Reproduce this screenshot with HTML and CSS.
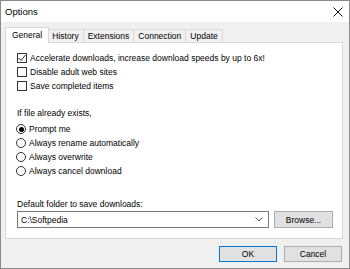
FILE: index.html
```html
<!DOCTYPE html>
<html lang="en">
  <head>
    <meta charset="UTF-8" />
    <title>Options</title>
    <link rel="stylesheet" href="styles.css">
  </head>
  <body>
    <div class="window">
      <div class="titleBar">
        <span class="title">Options</span>
        <svg class="closeIcon" width="10" height="10" viewBox="0 0 10 10">
          <path d="M0.5 0.5 L9.5 9.5 M9.5 0.5 L0.5 9.5" stroke="#111" stroke-width="1" fill="none" />
        </svg>
      </div>
      <div class="content">
        <div class="tabs">
          <span class="tab active">General</span>
          <span class="tab">History</span>
          <span class="tab">Extensions</span>
          <span class="tab">Connection</span>
          <span class="tab">Update</span>
        </div>
        <div class="panel">
          <div class="checkRow">
            <span class="box">
              <svg width="8" height="8" viewBox="0 0 8 8">
                <path d="M0.5 4 L3 6.5 L7.5 1" stroke="#222" stroke-width="1" fill="none" />
              </svg>
            </span>
            Accelerate downloads, increase download speeds by up to 6x!
          </div>
          <div class="checkRow"><span class="box"></span>Disable adult web sites</div>
          <div class="checkRow"><span class="box"></span>Save completed items</div>

          <div class="groupLabel">If file already exists,</div>
          <div class="radioList">
            <div class="radioRow"><span class="radio on"></span>Prompt me</div>
            <div class="radioRow"><span class="radio"></span>Always rename automatically</div>
            <div class="radioRow"><span class="radio"></span>Always overwrite</div>
            <div class="radioRow"><span class="radio"></span>Always cancel download</div>
          </div>

          <div class="folderLabel">Default folder to save downloads:</div>
          <div class="folderRow">
            <div class="combo">
              <span>C:\Softpedia</span>
              <svg width="8" height="5" viewBox="0 0 8 5">
                <path d="M0.5 0.5 L4 4 L7.5 0.5" stroke="#555" stroke-width="1" fill="none" />
              </svg>
            </div>
            <button class="btn browseBtn">Browse...</button>
          </div>
        </div>
        <div class="actions">
          <button class="btn defaultBtn">OK</button>
          <button class="btn">Cancel</button>
        </div>
      </div>
    </div>
  </body>
</html>
```

FILE: styles.css
```css
body {
  margin: 0;
  background-color: #f0f0f0;
  font-family: "Liberation Sans", Arial, sans-serif;
  font-size: 8.5px;
  color: #000000;
}
.window {
  width: 350px;
  height: 269px;
  box-sizing: border-box;
  border: 1px solid #8a8a8a;
  background-color: #f0f0f0;
}
.titleBar {
  height: 21px;
  background-color: #ffffff;
  display: flex;
  align-items: center;
  padding: 0 6px 0 4px;
}
.title {
  font-size: 9.5px;
  flex-grow: 1;
}
.content {
  padding: 5px 6px 0px 4px;
}
.tabs {
  display: flex;
  align-items: flex-end;
  height: 15px;
  padding-left: 1px;
}
.tab {
  height: 13px;
  box-sizing: border-box;
  line-height: 12px;
  padding: 0 4px;
  border: 1px solid #d9d9d9;
  border-bottom: none;
  margin-left: -1px;
  background-color: #f0f0f0;
}
.tab.active {
  position: relative;
  height: 16px;
  line-height: 14px;
  margin-bottom: -1px;
  padding: 0 6px;
  background-color: #ffffff;
  margin-right: -1px;
  z-index: 1;
}
.panel {
  height: 197px;
  box-sizing: border-box;
  border: 1px solid #d9d9d9;
  background-color: #ffffff;
  padding: 8px 9px 0px 11px;
}
.checkRow,
.radioRow {
  height: 14px;
  display: flex;
  align-items: center;
}
.box {
  width: 10px;
  height: 10px;
  box-sizing: border-box;
  border: 1px solid #333333;
  background-color: #ffffff;
  margin-right: 3px;
  display: flex;
  align-items: center;
  justify-content: center;
}
.groupLabel {
  margin-top: 13px;
  height: 14px;
  line-height: 14px;
}
.radioList {
  margin-top: 2px;
}
.radio {
  width: 10px;
  height: 10px;
  box-sizing: border-box;
  border: 1px solid #333333;
  border-radius: 50%;
  margin-left: -1px;
  margin-right: 3px;
  display: flex;
  align-items: center;
  justify-content: center;
}
.radio.on::after {
  content: "";
  width: 5px;
  height: 5px;
  border-radius: 50%;
  background-color: #000000;
}
.folderLabel {
  margin-top: 19px;
  height: 14px;
  line-height: 14px;
}
.folderRow {
  display: flex;
  gap: 5px;
  height: 17px;
}
.combo {
  flex-grow: 1;
  box-sizing: border-box;
  border: 1px solid #7a7a7a;
  background-color: #ffffff;
  display: flex;
  align-items: center;
  justify-content: space-between;
  padding: 0 5px 0 3px;
}
.btn {
  font-family: "Liberation Sans", Arial, sans-serif;
  font-size: 8.5px;
  color: #000000;
  background-color: #e1e1e1;
  border: 1px solid #adadad;
  padding: 0;
  margin: 0;
}
.browseBtn {
  width: 59px;
  height: 17px;
}
.actions {
  display: flex;
  justify-content: flex-end;
  gap: 7px;
  margin-top: 7px;
  padding-right: 1px;
}
.actions > .btn {
  width: 58px;
  height: 16px;
}
.defaultBtn {
  border-color: #0078d7;
}
```
